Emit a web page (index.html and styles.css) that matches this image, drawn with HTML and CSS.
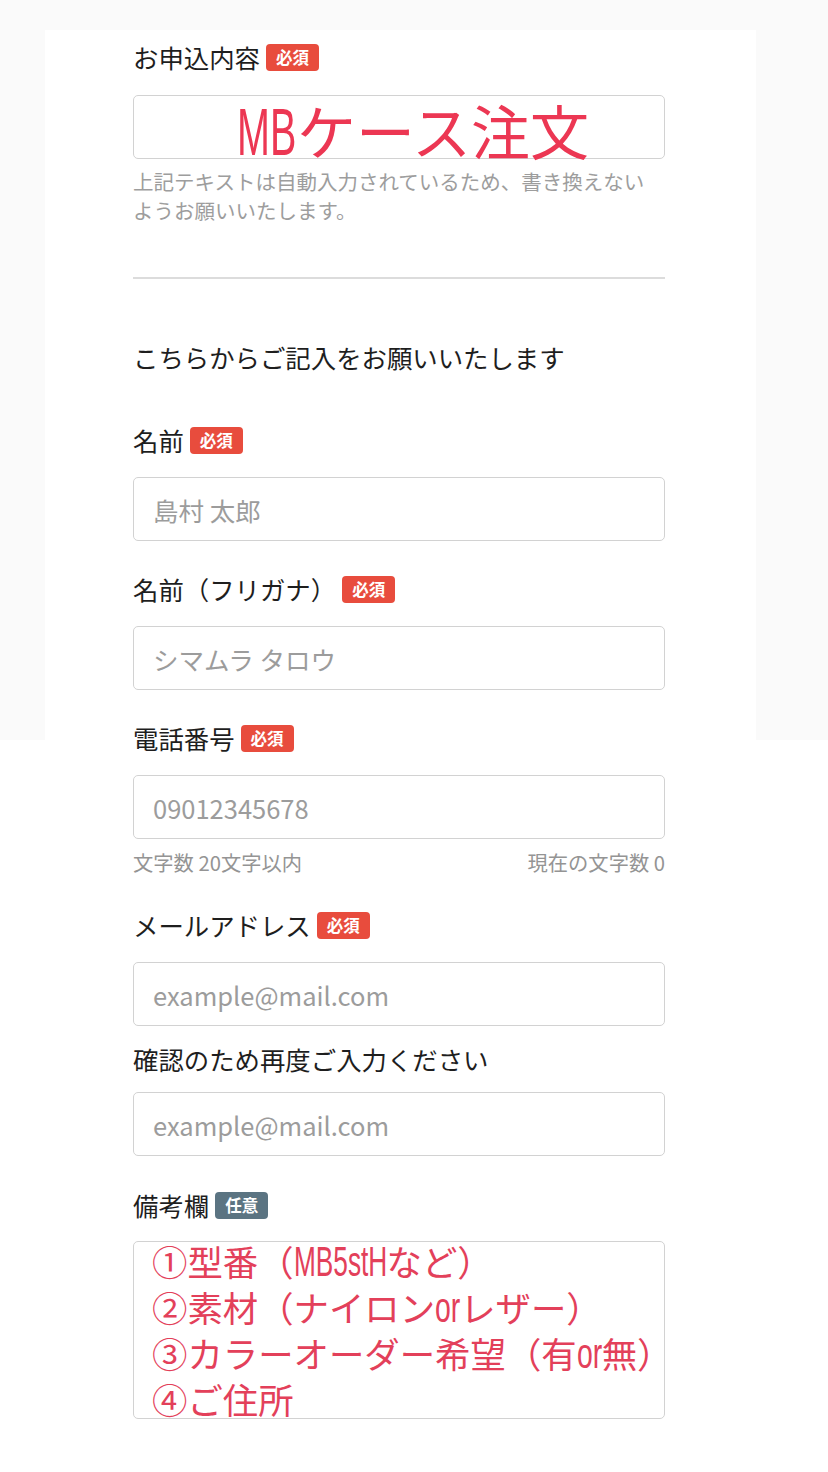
FILE: index.html
```html
<!DOCTYPE html>
<html lang="ja">
<head>
<meta charset="utf-8">
<title>お申込フォーム</title>
<link rel="stylesheet" href="styles.css">
</head>
<body>
<main class="form">
  <section class="group group-first">
    <div class="label-row"><span class="label">お申込内容</span><span class="badge req">必須</span></div>
    <div class="field title-field"><span class="lat lat-mb"><span>MB</span></span>ケース注文</div>
    <p class="note">上記テキストは自動入力されているため、書き換えない<br>ようお願いいたします。</p>
  </section>

  <hr class="divider">

  <p class="lead">こちらからご記入をお願いいたします</p>

  <section class="group group-name">
    <div class="label-row"><span class="label">名前</span><span class="badge req">必須</span></div>
    <input class="input" type="text" placeholder="島村 太郎">
  </section>

  <section class="group">
    <div class="label-row"><span class="label">名前（フリガナ）</span><span class="badge req">必須</span></div>
    <input class="input" type="text" placeholder="シマムラ タロウ">
  </section>

  <section class="group">
    <div class="label-row"><span class="label">電話番号</span><span class="badge req">必須</span></div>
    <input class="input" type="tel" placeholder="09012345678">
    <div class="counter"><span>文字数 20文字以内</span><span>現在の文字数 0</span></div>
  </section>

  <section class="group group-mail">
    <div class="label-row"><span class="label">メールアドレス</span><span class="badge req">必須</span></div>
    <input class="input" type="email" placeholder="example@mail.com">
    <div class="label-row confirm-row"><span class="label">確認のため再度ご入力ください</span></div>
    <input class="input input-confirm" type="email" placeholder="example@mail.com">
  </section>

  <section class="group group-memo">
    <div class="label-row"><span class="label">備考欄</span><span class="badge opt">任意</span></div>
    <div class="memo">
      <div class="memo-line">①型番（<span class="lat lat-code"><span>MB5stH</span></span>など）</div>
      <div class="memo-line">②素材（ナイロン<span class="lat lat-or"><span>or</span></span>レザー）</div>
      <div class="memo-line">③カラーオーダー希望（有<span class="lat lat-or"><span>or</span></span>無）</div>
      <div class="memo-line">④ご住所</div>
    </div>
  </section>
</main>
</body>
</html>
```

FILE: styles.css
```css
html, body {
  margin: 0;
  padding: 0;
}

body {
  font-family: "Noto Sans CJK JP", "Noto Sans", sans-serif;
  color: #1e1e1e;
  min-height: 1472px;
  background:
    linear-gradient(#fafafa, #fafafa) 0 0 / 100% 30px no-repeat,
    linear-gradient(to right, #fafafa 45px, #ffffff 45px, #ffffff 756px, #fafafa 756px) 0 0 / 100% 740px no-repeat,
    #ffffff;
}

.form {
  width: 532px;
  margin-left: 133px;
  padding-top: 39px;
}

.group {
  margin-top: 30px;
}

.group-first {
  margin-top: 0;
}

.group-name {
  margin-top: 47px;
}

.group-mail {
  margin-top: 32px;
}

.group-memo {
  margin-top: 31px;
}

.label-row {
  display: flex;
  align-items: center;
  gap: 6px;
  height: 36px;
}

.label {
  font-size: 25.4px;
  line-height: 36px;
  color: #1e1e1e;
  white-space: nowrap;
}

.badge {
  display: inline-block;
  height: 27px;
  line-height: 27px;
  padding: 0 10px;
  border-radius: 4px;
  color: #fff;
  font-size: 16.5px;
  font-weight: 700;
}

.badge.req {
  background: #e84c3d;
}

.badge.opt {
  background: #5b7482;
}

.field,
.input {
  display: block;
  box-sizing: border-box;
  width: 100%;
  height: 64px;
  margin: 19px 0 0;
  border: 1.5px solid #d2d2d2;
  border-radius: 5px;
  background: #fff;
}

.input {
  padding: 0 19px;
  font-family: "Noto Sans CJK JP", "Noto Sans", sans-serif;
  font-size: 25.5px;
  color: #333;
  outline: none;
}

.input::placeholder {
  color: #9c9c9c;
  opacity: 1;
}

.title-field {
  margin-top: 20px;
  padding-left: 103px;
  padding-top: 6px;
  font-size: 59px;
  line-height: 56px;
  color: #ec3753;
  white-space: nowrap;
  overflow: visible;
}

.lat {
  display: inline-block;
  white-space: nowrap;
  font-family: "Liberation Sans", Arial, sans-serif;
  vertical-align: baseline;
}

.lat > span {
  display: inline-block;
  transform-origin: 0 50%;
}

.lat-mb {
  width: 60px;
  font-size: 67px;
}

.lat-mb > span {
  transform: scaleX(0.59);
}

.lat-code {
  width: 93px;
  font-size: 43px;
}

.lat-code > span {
  transform: scaleX(0.61);
}

.lat-or {
  width: 25px;
  font-size: 43px;
}

.lat-or > span {
  transform: scaleX(0.66);
}

.note {
  margin: 8px 0 0;
  font-size: 20.5px;
  line-height: 29px;
  color: #9d9d9d;
  white-space: nowrap;
}

.divider {
  margin: 52px 0 0;
  border: 0;
  height: 2px;
  background: #dcdcdc;
}

.lead {
  margin: 60px 0 0;
  font-size: 25.4px;
  line-height: 36px;
  color: #1e1e1e;
  white-space: nowrap;
}

.counter {
  display: flex;
  justify-content: space-between;
  margin-top: 10px;
  font-size: 20.3px;
  line-height: 26px;
  color: #949494;
}

.confirm-row {
  margin-top: 15px;
}

.input-confirm {
  margin-top: 15px;
}

.memo {
  box-sizing: border-box;
  height: 178px;
  margin-top: 18px;
  padding: 0 0 0 18px;
  border: 1.5px solid #d2d2d2;
  border-radius: 5px;
  color: #e3405a;
  font-size: 35.4px;
  line-height: 46px;
  white-space: nowrap;
  overflow: visible;
}

.memo-line {
  height: 46px;
}

.memo-line:first-child {
  margin-top: -4px;
}
```
